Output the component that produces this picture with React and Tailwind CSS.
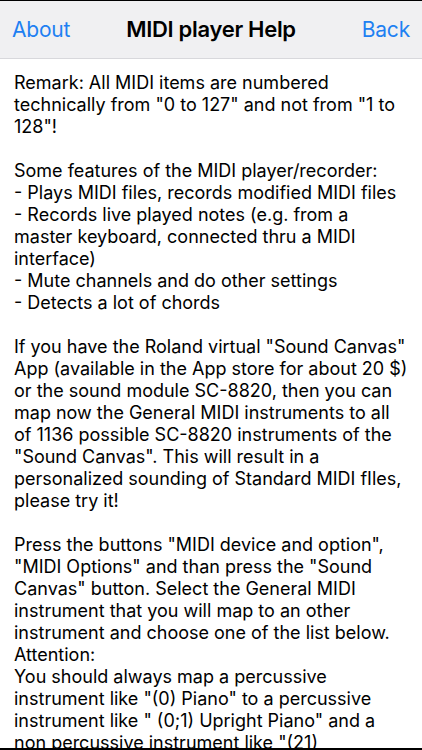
const lines = [
  'Remark: All MIDI items are numbered',
  'technically from "0 to 127" and not from "1 to',
  '128"!',
  '',
  'Some features of the MIDI player/recorder:',
  '- Plays MIDI files, records modified MIDI files',
  '- Records live played notes (e.g. from a',
  'master keyboard, connected thru a MIDI',
  'interface)',
  '- Mute channels and do other settings',
  '- Detects a lot of chords',
  '',
  'If you have the Roland virtual "Sound Canvas"',
  'App (available in the App store for about 20 $)',
  'or the sound module SC-8820, then you can',
  'map now the General MIDI instruments to all',
  'of 1136 possible SC-8820 instruments of the',
  '"Sound Canvas". This will result in a',
  'personalized sounding of Standard MIDI fIles,',
  'please try it!',
  '',
  'Press the buttons "MIDI device and option",',
  '"MIDI Options" and than press the "Sound',
  'Canvas" button. Select the General MIDI',
  'instrument that you will map to an other',
  'instrument and choose one of the list below.',
  'Attention:',
  'You should always map a percussive',
  'instrument like "(0) Piano" to a percussive',
  'instrument like " (0;1) Upright Piano" and a',
  'non percussive instrument like "(21)',
  'Accordion" to a non percussive instrument.',
];

export default function App() {
  return (
    <div className="w-[422px] h-[750px] bg-black flex flex-col overflow-hidden font-['Inter','Liberation_Sans',sans-serif]">
      <div className="h-px bg-black" />
      <header className="h-[58px] shrink-0 bg-[#f0f0f2] border-b border-[#d8d8dc] grid grid-cols-[1fr_auto_1fr] items-center px-3">
        <button className="justify-self-start text-[21px] text-[#1e80f2] tracking-[-0.2px]">About</button>
        <h1 className="text-[22px] font-semibold text-black tracking-[-0.3px]">MIDI player Help</h1>
        <button className="justify-self-end text-[21px] text-[#1e80f2] tracking-[-0.2px]">Back</button>
      </header>
      <main className="flex-1 bg-white px-[14px] pt-[13px] overflow-hidden">
        {lines.map((l, i) => (
          <div key={i} className="h-[22px] leading-[22px] text-[18px] text-black whitespace-nowrap">
            {l || '\u00a0'}
          </div>
        ))}
      </main>
      <div className="h-[2px] bg-black shrink-0" />
    </div>
  );
}
